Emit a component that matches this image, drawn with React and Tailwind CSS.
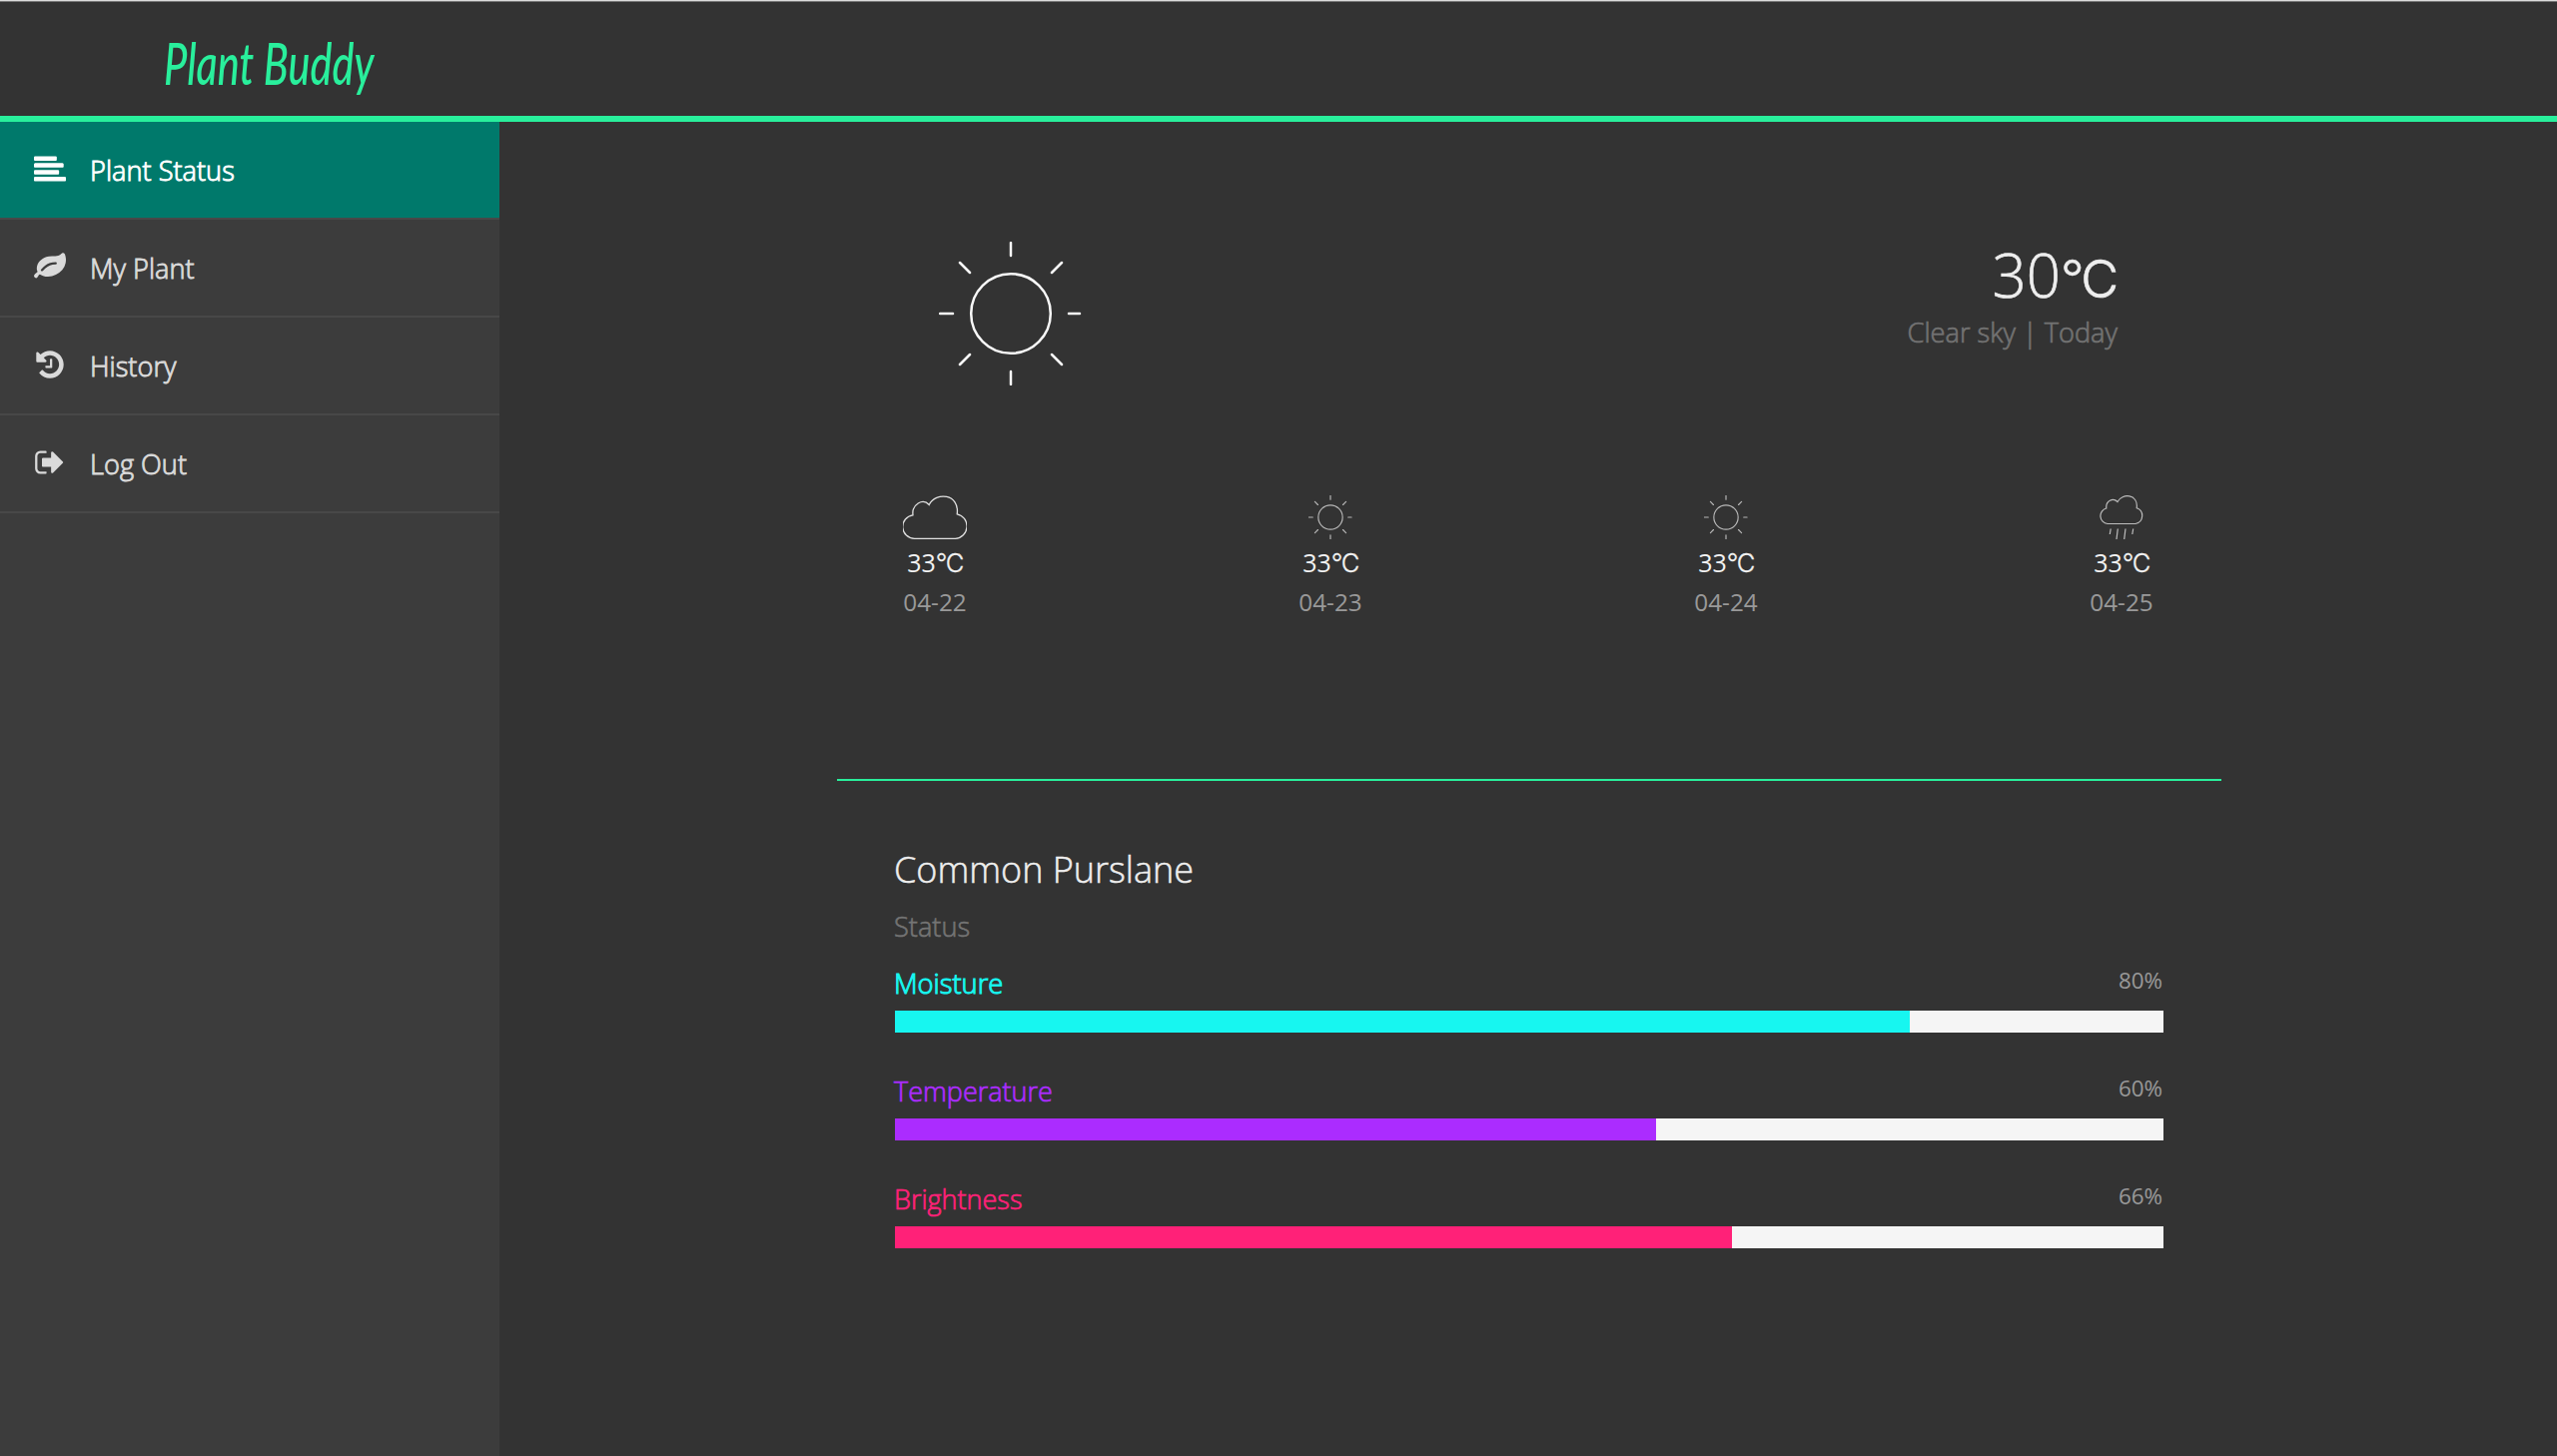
import React from "react";

const ICONS = {
  status: "M1280 256v128q0 26-19 45t-45 19H64q-26 0-45-19T0 384V256q0-26 19-45t45-19h1152q26 0 45 19t19 45zM1664 640v128q0 26-19 45t-45 19H64q-26 0-45-19T0 768V640q0-26 19-45t45-19h1536q26 0 45 19t19 45zM1408 1024v128q0 26-19 45t-45 19H64q-26 0-45-19t-19-45v-128q0-26 19-45t45-19h1280q26 0 45 19t19 45zM1792 1408v128q0 26-19 45t-45 19H64q-26 0-45-19t-19-45v-128q0-26 19-45t45-19h1664q26 0 45 19t19 45z",
  leaf: "M1280 704q0-26-19-45t-45-19q-172 0-318 49.5t-259.5 134-235.5 219.5q-19 21-19 45 0 26 19 45t45 19q24 0 45-19 27-24 74-71t67-66q137-124 268.5-176t313.5-52q26 0 45-19t19-45zm512-198q0 95-20 193-46 224-184.5 383t-357.5 268q-214 108-438 108-148 0-286-47-15-5-88-42t-96-37q-16 0-39.5 32t-45 70-52.5 70-60 32q-43 0-63.5-17.5t-45.5-59.5q-2-4-6-11t-5.5-10-3-9.5-1.5-13.5q0-35 31-73.5t68-65.5 68-56 31-48q0-4-14-38t-16-44q-9-51-9-104 0-115 43.5-220t119-184.5 170.5-139 204-95.5q55-18 145-25.5t179.5-9 178.5-6 163.5-24 113.5-56.5l29.5-29.5 29.5-28 27-20 36.5-16 43.5-4.5q39 0 70.5 46t47.5 112 24 124 8 96z",
  history: "M1664 896q0 156-61 298t-164 245-245 164-298 61q-172 0-327-72.5t-264-204.5q-7-10-6.5-22.5t8.5-20.5l137-138q10-9 25-9 16 2 23 12 73 95 179 147t225 52q104 0 198.5-40.5t163.5-109.5 109.5-163.5 40.5-198.5-40.5-198.5-109.5-163.5-163.5-109.5-198.5-40.5q-98 0-188 35.5t-160 101.5l137 138q31 30 14 69-17 40-59 40h-448q-26 0-45-19t-19-45v-448q0-42 40-59 39-17 69 14l130 129q107-101 244.5-156.5t284.5-55.5q156 0 298 61t245 164 164 245 61 298zm-640-288v448q0 14-9 23t-23 9h-320q-14 0-23-9t-9-23v-64q0-14 9-23t23-9h224v-352q0-14 9-23t23-9h64q14 0 23 9t9 23z",
  logout: "M704 1440q0 4 1 20t.5 26.5-3 23.5-10 19.5-20.5 6.5h-320q-119 0-203.5-84.5t-84.5-203.5v-704q0-119 84.5-203.5t203.5-84.5h320q13 0 22.5 9.5t9.5 22.5q0 4 1 20t.5 26.5-3 23.5-10 19.5-20.5 6.5h-320q-66 0-113 47t-47 113v704q0 66 47 113t113 47h312l11.5 1 11.5 3 8 5.5 7 9 2 13.5zm928-544q0 26-19 45l-544 544q-19 19-45 19t-45-19-19-45v-288h-448q-26 0-45-19t-19-45v-384q0-26 19-45t45-19h448v-288q0-26 19-45t45-19 45 19l544 544q19 19 19 45z",
};

const NAV = [
  { label: "Plant Status", icon: "status", active: true },
  { label: "My Plant", icon: "leaf" },
  { label: "History", icon: "history" },
  { label: "Log Out", icon: "logout" },
];

const FORECAST = [
  { date: "04-22", Icon: CloudIcon },
  { date: "04-23", Icon: SmallSun },
  { date: "04-24", Icon: SmallSun },
  { date: "04-25", Icon: RainIcon },
];

const METERS = [
  { label: "Moisture", value: 80, text: "text-[#17f6f0] text-[27.300px]/[37px] [-webkit-text-stroke:1px]", bar: "bg-[#17f6f0]" },
  { label: "Temperature", value: 60, text: "text-[#ab2cff] text-[27px]/[37px] [-webkit-text-stroke:0.7px]", bar: "bg-[#ab2cff]" },
  { label: "Brightness", value: 66, text: "text-[#ff2178] text-[27px]/[37px] [-webkit-text-stroke:0.7px]", bar: "bg-[#ff2178]" },
];

function Sun({ className, strokeWidth }) {
  return (
    <svg viewBox="-72 -72 144 144" className={className} fill="none" stroke="currentColor" strokeWidth={strokeWidth} strokeLinecap="round">
      <circle r="39.8" />
      <path d="M0-71V-58M0 58V71M-71 0H-58M58 0H69M-51-51-41-41M51-51 41-41M-51 51-41 41M51 51 41 41" />
    </svg>
  );
}

function SmallSun() {
  return <Sun className="h-11 w-11 text-[#b8b8b8]" strokeWidth="3.8" />;
}

function CloudIcon() {
  return (
    <svg viewBox="0 0 64 44" className="h-11 w-16 text-[#e0e0e0]" fill="none" stroke="currentColor" strokeWidth="1.3">
      <path d="M11.5 43.300A11.800 11.800 0 0 1 10 19.800C8.600 9 20 2.400 26.200 9.500C33-4 57-1.500 54.200 18.800A12.400 12.400 0 0 1 52.500 43.300Z" />
    </svg>
  );
}

function RainIcon() {
  return (
    <svg viewBox="0 0 44 44" className="h-11 w-11 text-[#bdbdbd]" fill="none" stroke="currentColor" strokeWidth="1.2">
      <path d="M8 28.500A7.900 7.900 0 0 1 6.800 13C6 5.500 13.500 2 18 6.500C22.500-2.500 39-1.500 37.200 12.700A8.200 8.200 0 0 1 36 28.500Z" />
      <path d="M11.200 33.500 10.300 39M18.300 33.500 17 44M26 33.500 24.700 44M33.700 33.500 32.800 39" />
    </svg>
  );
}

function NavItem({ label, icon, active }) {
  return (
    <li className={`flex h-[98px] items-start border-b-2 border-[#484848] pl-[34px] ${active ? "bg-[#00796b] text-white" : "text-[#dadada]"}`}>
      <svg viewBox="0 0 1792 1792" className="mt-[30.5px] h-8 w-8 fill-current">
        <path d={ICONS[icon]} />
      </svg>
      <span className="ml-6 mt-[31px] text-[27.200px]/[35px] font-light [-webkit-text-stroke:0.9px]">{label}</span>
    </li>
  );
}

function Forecast({ date, Icon }) {
  return (
    <div className="flex w-16 flex-col items-center">
      <Icon />
      <span className="mt-[5px] flex items-baseline text-[25px]/[36px] text-[#f2f2f2]">
        33<span className="font-[Inter] text-[25.500px] font-light tracking-[-1.500px] [-webkit-text-stroke:0.3px]">°C</span>
      </span>
      <span className="mt-[3px] text-[24.300px]/[36px] text-[#999]">{date}</span>
    </div>
  );
}

function Meter({ label, value, text, bar }) {
  return (
    <div className="flex h-[108px] flex-col">
      <div className="flex h-[46px] items-start justify-between">
        <span className={`-ml-px font-light ${text}`}>{label}</span>
        <span className="mr-px text-[22.400px]/[32px] text-[#999]">{value}%</span>
      </div>
      <div className="h-[22px] bg-[#f5f5f5]">
        <div className={`h-full ${bar}`} style={{ width: `${value}%` }} />
      </div>
    </div>
  );
}

export default function App() {
  return (
    <div className="flex h-[1458px] w-full flex-col overflow-hidden bg-[#333] font-['Open_Sans',sans-serif]">
      <header className="h-[122px] shrink-0 border-t border-b-6 border-t-[#dcdcdc] border-b-[#29ef9c] pl-[164px] pt-[28px] shadow-[inset_0_1px_0_#777]">
        <h1 className="w-[290px] origin-left scale-x-[0.725] whitespace-nowrap font-[Lato] text-[57px]/[68px] font-medium italic text-[#29ef9c]">
          Plant Buddy
        </h1>
      </header>
      <div className="flex min-h-0 flex-1">
        <nav className="w-[500px] shrink-0 bg-[#3c3c3c]">
          <ul>
            {NAV.map((item) => <NavItem key={item.label} {...item} />)}
          </ul>
        </nav>
        <main className="flex-1 pl-[338px]">
          <section className="h-[660px] w-[1386px] border-b-2 border-[#29ef9c] pl-[66px] pr-[68px] pt-[120px]">
            <div className="flex h-[254px] items-start justify-between px-9">
              <Sun className="h-36 w-36 text-[#f8f8f8]" strokeWidth="2.5" />
              <div className="-mt-0.5 flex flex-col items-end">
                <span className="mr-0.5 flex items-baseline text-[60px]/[70px] font-light text-[#eee] [-webkit-text-stroke:0.6px]">
                  30<span className="font-[Inter] text-[52px] tracking-[-3px]">°C</span>
                </span>
                <span className="-mt-px text-[27.200px]/[37px] font-light text-[#727272] [-webkit-text-stroke:0.7px]">Clear sky | Today</span>
              </div>
            </div>
            <div className="flex justify-between">
              {FORECAST.map((day) => <Forecast key={day.date} {...day} />)}
            </div>
          </section>
          <section className="w-[1328px] pl-[58px] pt-[63px]">
            <h2 className="-ml-px text-[36px]/[52px] font-light text-[#eee] [-webkit-text-stroke:0.5px]">Common Purslane</h2>
            <p className="-ml-px mt-[13px] text-[27.200px]/[36px] font-light text-[#747474] [-webkit-text-stroke:0.6px]">Status</p>
            <div className="mt-5">
              {METERS.map((meter) => <Meter key={meter.label} {...meter} />)}
            </div>
          </section>
        </main>
      </div>
    </div>
  );
}
